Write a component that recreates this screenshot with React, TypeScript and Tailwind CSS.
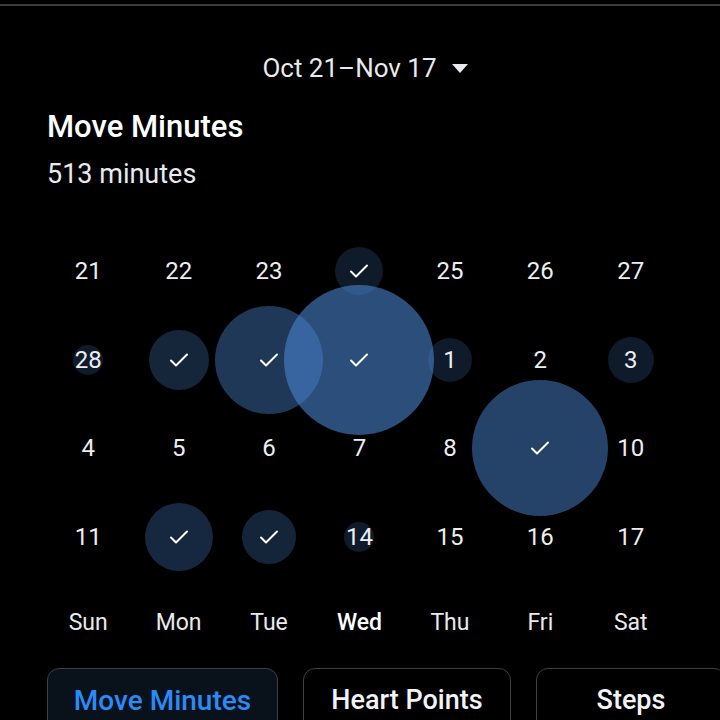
import React from 'react';

type Day = { n: number; r?: number; a?: number; done?: boolean };

const weeks: Day[][] = [
  [{ n: 21 }, { n: 22 }, { n: 23 }, { n: 24, r: 24, a: 0.2, done: true }, { n: 25 }, { n: 26 }, { n: 27 }],
  [
    { n: 28, r: 15, a: 0.2 },
    { n: 29, r: 30, a: 0.28, done: true },
    { n: 30, r: 54, a: 0.42, done: true },
    { n: 31, r: 75, a: 0.58, done: true },
    { n: 1, r: 22, a: 0.2 },
    { n: 2 },
    { n: 3, r: 23, a: 0.2 },
  ],
  [{ n: 4 }, { n: 5 }, { n: 6 }, { n: 7 }, { n: 8 }, { n: 9, r: 68, a: 0.5, done: true }, { n: 10 }],
  [
    { n: 11 },
    { n: 12, r: 34, a: 0.3, done: true },
    { n: 13, r: 27, a: 0.27, done: true },
    { n: 14, r: 15, a: 0.2 },
    { n: 15 },
    { n: 16 },
    { n: 17 },
  ],
];

const weekdays = ['Sun', 'Mon', 'Tue', 'Wed', 'Thu', 'Fri', 'Sat'];

const Check = () => (
  <svg width="20" height="16" viewBox="0 0 20 16" fill="none" stroke="white" strokeWidth="2" strokeLinecap="round" strokeLinejoin="round">
    <polyline points="2,8.5 7,13.5 18,2.5" />
  </svg>
);

const DayCell: React.FC<{ day: Day }> = ({ day }) => (
  <div className="relative h-[88.5px] flex items-center justify-center">
    {day.r && (
      <div
        className="absolute left-1/2 top-1/2 -translate-x-1/2 -translate-y-1/2 rounded-full z-0"
        style={{ width: day.r * 2, height: day.r * 2, backgroundColor: `rgba(74,134,210,${day.a})` }}
      />
    )}
    <div className="relative z-10 text-[24px] text-[#eceef0] leading-none">
      {day.done ? <Check /> : day.n}
    </div>
  </div>
);

export default function App() {
  return (
    <div className="w-[720px] h-[720px] overflow-hidden bg-black text-white font-['Roboto','Liberation_Sans',sans-serif]">
      <div className="pt-[4px]">
        <div className="h-[2px] bg-[#3c3c3c]" />
      </div>

      <div className="flex items-center justify-center gap-[15px] pt-[49px] pl-[10px]">
        <span className="text-[26px] text-[#e8eaed] leading-none">Oct 21–Nov 17</span>
        <svg width="16" height="9" viewBox="0 0 16 9">
          <polygon points="0,0 16,0 8,9" fill="#e8eaed" />
        </svg>
      </div>

      <div className="px-[47px] pt-[29.5px]">
        <h1 className="text-[31px] font-medium leading-none">Move Minutes</h1>
        <p className="text-[27px] leading-none pt-[19px] text-[#e8eaed]">513 minutes</p>
      </div>

      <div className="ml-[43px] w-[633px] pt-[39.5px]">
        {weeks.map((w, i) => (
          <div key={i} className="grid grid-cols-7">
            {w.map((d) => (
              <DayCell key={d.n} day={d} />
            ))}
          </div>
        ))}
        <div className="grid grid-cols-7 pt-[29.5px]">
          {weekdays.map((d) => (
            <div key={d} className={`text-center text-[23px] leading-none ${d === 'Wed' ? 'font-medium text-white' : 'text-[#e8eaed]'}`}>
              {d}
            </div>
          ))}
        </div>
      </div>

      <div className="flex gap-[25px] pl-[47px] pt-[34.5px]">
        <div className="shrink-0 w-[231px] h-[70px] rounded-[12px] border-[1.5px] border-[#3c4043] bg-[#09111a] flex justify-center pt-[17.5px]">
          <span className="text-[28px] font-medium text-[#2a8af6] leading-none">Move Minutes</span>
        </div>
        <div className="shrink-0 w-[208px] h-[70px] rounded-[12px] border-[1.5px] border-[#3c4043] flex justify-center pt-[17.5px]">
          <span className="text-[27px] font-medium text-[#f1f3f4] leading-none">Heart Points</span>
        </div>
        <div className="shrink-0 w-[190px] h-[70px] rounded-[12px] border-[1.5px] border-[#3c4043] flex justify-center pt-[17.5px]">
          <span className="text-[27px] font-medium text-[#f1f3f4] leading-none">Steps</span>
        </div>
      </div>
    </div>
  );
}
